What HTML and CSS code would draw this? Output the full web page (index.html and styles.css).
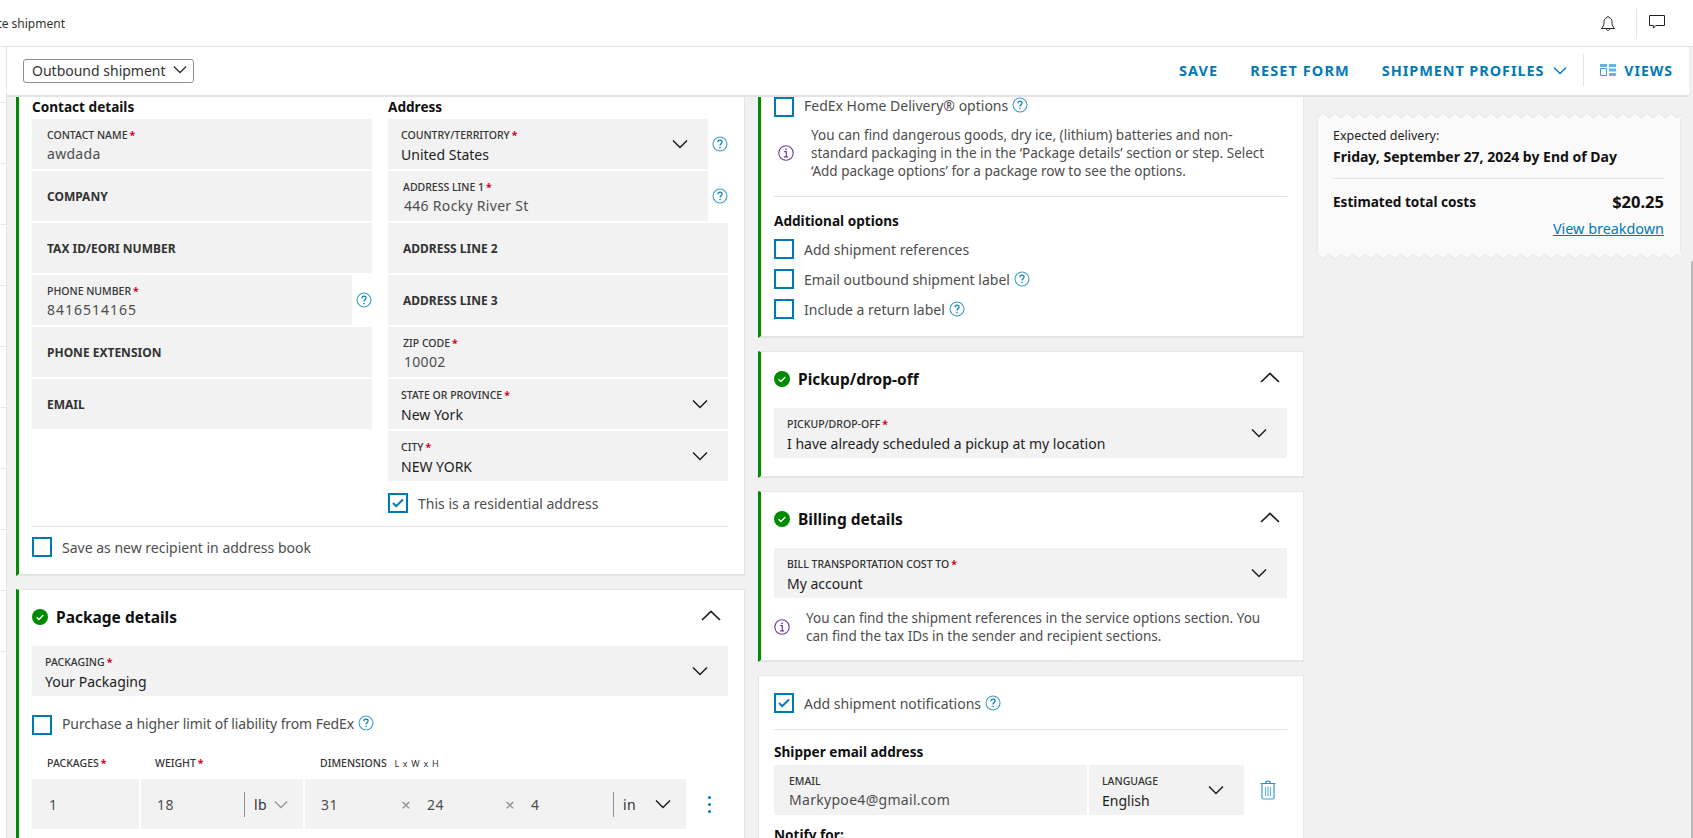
FILE: index.html
```html
<!DOCTYPE html>
<html lang="en">
<head>
    <meta charset="UTF-8">
    <meta name="viewport" content="width=device-width, initial-scale=1.0">
    <title>Create shipment</title>
    <link rel="stylesheet" href="styles.css">
</head>
<body>
    <svg class="sprites" aria-hidden="true">
        <symbol id="chev" viewBox="0 0 16 10"><path d="M1 1.5l7 7 7-7" fill="none" stroke="currentColor" stroke-width="1.5"/></symbol>
        <symbol id="chev-up" viewBox="0 0 20 11"><path d="M1 10l9-8.5 9 8.5" fill="none" stroke="currentColor" stroke-width="1.7"/></symbol>
        <symbol id="help" viewBox="0 0 16 16"><circle cx="8" cy="8" r="7" fill="none" stroke="#3d9bd0" stroke-width="1.1"/><path d="M5.9 6.2c0-1.3 1-2 2.1-2s2.1.8 2.1 1.9c0 1.6-2.1 1.6-2.1 3.4" fill="none" stroke="#007ab7" stroke-width="1.2"/><rect x="7.4" y="10.8" width="1.3" height="1.4" fill="#007ab7"/></symbol>
        <symbol id="done" viewBox="0 0 16 16"><circle cx="8" cy="8" r="8" fill="#008a00"/><path d="M4.6 8.2l2.3 2.2 4.4-4.4" fill="none" stroke="#fff" stroke-width="1.4"/></symbol>
        <symbol id="info" viewBox="0 0 16 16"><circle cx="8" cy="8" r="7.2" fill="none" stroke="#6a3a9e" stroke-width="1.1"/><rect x="7.3" y="3.6" width="1.5" height="1.5" fill="#6a3a9e"/><path d="M6.2 6.7h2.1v5M6 11.8h4.2" fill="none" stroke="#6a3a9e" stroke-width="1.2"/></symbol>
        <symbol id="tick" viewBox="0 0 12 10"><path d="M1 5l3.2 3.2L11 1.5" fill="none" stroke="#007ab7" stroke-width="2"/></symbol>
    </svg>

    <header class="topbar">
        <div class="crumb"><span>Create shipment</span></div>
        <svg class="bell" viewBox="0 0 16 17"><path d="M8 1.500c-.7 0-1 .5-1 1.100C4.800 3.300 4 5 4 7.200c0 3-.8 4.600-2.500 6.300h13C12.800 11.800 12 10.200 12 7.200c0-2.200-.8-3.900-3-4.600 0-.6-.3-1.100-1-1.100zM6.300 13.800c.2 1.100.9 1.700 1.700 1.700s1.500-.6 1.700-1.700" fill="none" stroke="#222" stroke-width="1"/></svg>
        <span class="topbar-sep"></span>
        <svg class="comment" viewBox="0 0 16 14"><path d="M.5.5h15v10H7l-2.600 2.500v-2.500H.5z" fill="none" stroke="#222" stroke-width="1"/></svg>
    </header>

    <div class="shell">
        <aside class="rail">
            <i></i><i></i><i></i><i></i><i></i><i></i><i></i><i></i><i></i><i></i>
        </aside>

        <div class="content">
            <div class="toolbar">
                <div class="select-box">Outbound shipment <svg class="chev-sm"><use href="#chev"/></svg></div>
                <nav class="actions">
                    <a class="action save">SAVE</a>
                    <a class="action reset">RESET FORM</a>
                    <a class="action profiles">SHIPMENT PROFILES <svg class="chev-blue"><use href="#chev"/></svg></a>
                    <span class="action-sep"></span>
                    <a class="action views">
                        <svg class="views-icon" viewBox="0 0 16 12"><path d="M0 0h7v3H0zM9 0h7v3H9zM9 4.500h7v3H9zM9 9h7v3H9z" fill="#6db3d8"/><path d="M.5 4.500h6v7h-6z" fill="none" stroke="#3d9bd0"/></svg>
                        VIEWS
                    </a>
                </nav>
            </div>

            <main class="columns">
                <div class="col col-left">
                    <section class="card green first">
                        <div class="addr-grid">
                            <div class="stack">
                                <h4 class="sub">Contact details</h4>
                                <div class="field f-a"><label>CONTACT NAME<b>*</b></label><span class="val grey">awdada</span></div>
                                <div class="field empty f-a">COMPANY</div>
                                <div class="field empty f-a">TAX ID/EORI NUMBER</div>
                                <div class="with-help">
                                    <div class="field f-a"><label>PHONE NUMBER<b>*</b></label><span class="val grey digits">8416514165</span></div>
                                    <svg class="help"><use href="#help"/></svg>
                                </div>
                                <div class="field empty f-a">PHONE EXTENSION</div>
                                <div class="field empty f-a">EMAIL</div>
                            </div>
                            <div class="stack">
                                <h4 class="sub">Address</h4>
                                <div class="with-help">
                                    <div class="field dd f-c"><label>COUNTRY/TERRITORY<b>*</b></label><span class="val">United States</span><svg class="chev"><use href="#chev"/></svg></div>
                                    <svg class="help"><use href="#help"/></svg>
                                </div>
                                <div class="with-help">
                                    <div class="field f-d"><label>ADDRESS LINE 1<b>*</b></label><span class="val grey shift">446 Rocky River St</span></div>
                                    <svg class="help"><use href="#help"/></svg>
                                </div>
                                <div class="field empty f-d">ADDRESS LINE 2</div>
                                <div class="field empty f-d">ADDRESS LINE 3</div>
                                <div class="field f-d"><label>ZIP CODE<b>*</b></label><span class="val grey shift">10002</span></div>
                                <div class="field dd f-c"><label>STATE OR PROVINCE<b>*</b></label><span class="val">New York</span><svg class="chev"><use href="#chev"/></svg></div>
                                <div class="field dd f-c"><label>CITY<b>*</b></label><span class="val">NEW YORK</span><svg class="chev"><use href="#chev"/></svg></div>
                                <div class="check residential"><span class="box on"><svg><use href="#tick"/></svg></span>This is a residential address</div>
                            </div>
                        </div>
                        <hr class="rule rule-save">
                        <div class="check"><span class="box"></span>Save as new recipient in address book</div>
                    </section>

                    <section class="card green package">
                        <div class="card-head">
                            <svg class="done"><use href="#done"/></svg>
                            <h3>Package details</h3>
                            <svg class="chev-up"><use href="#chev-up"/></svg>
                        </div>
                        <div class="field dd f-b"><label>PACKAGING<b>*</b></label><span class="val">Your Packaging</span><svg class="chev"><use href="#chev"/></svg></div>
                        <div class="check raised liability"><span class="box"></span>Purchase a higher limit of liability from FedEx<svg class="help inline"><use href="#help"/></svg></div>
                        <div class="pkg-head">
                            <span class="ph-packages">PACKAGES<b>*</b></span>
                            <span class="ph-weight">WEIGHT<b>*</b></span>
                            <span class="ph-dims">DIMENSIONS <small>L x W x H</small></span>
                        </div>
                        <div class="pkg-row">
                            <div class="cell c-packages">1</div>
                            <div class="cell c-weight"><span class="num">18</span><span class="unit-sep"></span><span class="unit">lb</span><svg class="chev-grey"><use href="#chev"/></svg></div>
                            <div class="cell c-dims">
                                <span class="d1">31</span><span class="times">×</span><span class="d2">24</span><span class="times">×</span><span class="d3">4</span>
                                <span class="unit-sep"></span><span class="unit">in</span><svg class="chev"><use href="#chev"/></svg>
                            </div>
                            <div class="dots"><i></i><i></i><i></i></div>
                        </div>
                    </section>
                </div>

                <div class="col col-mid">
                    <section class="card green first service">
                        <div class="check raised"><span class="box"></span>FedEx Home Delivery® options<svg class="help inline"><use href="#help"/></svg></div>
                        <div class="note note-service">
                            <svg class="info"><use href="#info"/></svg>
                            <p>You can find dangerous goods, dry ice, (lithium) batteries and non-standard packaging in the in the ‘Package details’ section or step. Select ‘Add package options’ for a package row to see the options.</p>
                        </div>
                        <hr class="rule rule-options">
                        <h4 class="sub options-title">Additional options</h4>
                        <div class="check-list">
                            <div class="check"><span class="box"></span>Add shipment references</div>
                            <div class="check"><span class="box"></span>Email outbound shipment label<svg class="help inline"><use href="#help"/></svg></div>
                            <div class="check"><span class="box"></span>Include a return label<svg class="help inline"><use href="#help"/></svg></div>
                        </div>
                    </section>

                    <section class="card green pickup">
                        <div class="card-head">
                            <svg class="done"><use href="#done"/></svg>
                            <h3>Pickup/drop-off</h3>
                            <svg class="chev-up"><use href="#chev-up"/></svg>
                        </div>
                        <div class="field dd f-e"><label>PICKUP/DROP-OFF<b>*</b></label><span class="val">I have already scheduled a pickup at my location</span><svg class="chev"><use href="#chev"/></svg></div>
                    </section>

                    <section class="card green billing">
                        <div class="card-head">
                            <svg class="done"><use href="#done"/></svg>
                            <h3>Billing details</h3>
                            <svg class="chev-up"><use href="#chev-up"/></svg>
                        </div>
                        <div class="field dd f-e"><label>BILL TRANSPORTATION COST TO<b>*</b></label><span class="val">My account</span><svg class="chev"><use href="#chev"/></svg></div>
                        <div class="note note-billing">
                            <svg class="info"><use href="#info"/></svg>
                            <p>You can find the shipment references in the service options section. You can find the tax IDs in the sender and recipient sections.</p>
                        </div>
                    </section>

                    <section class="card notify">
                        <div class="check"><span class="box on"><svg><use href="#tick"/></svg></span>Add shipment notifications<svg class="help inline"><use href="#help"/></svg></div>
                        <hr class="rule rule-notify">
                        <h4 class="sub email-title">Shipper email address</h4>
                        <div class="email-row">
                            <div class="field f-g email"><label>EMAIL</label><span class="val grey">Markypoe4@gmail.com</span></div>
                            <div class="field dd f-h lang"><label>LANGUAGE</label><span class="val">English</span><svg class="chev"><use href="#chev"/></svg></div>
                            <svg class="trash" viewBox="0 0 16 20"><path d="M.5 3.500h15M5.500 3.500C5.500 1.500 6 1 8 1s2.500.5 2.500 2.500" fill="none" stroke="#2f8fc6" stroke-width="1.200"/><path d="M2 3.500v14c0 1 .5 1.500 1.500 1.500h9c1 0 1.500-.5 1.500-1.500v-14" fill="none" stroke="#3d9bd0" stroke-width="1.200"/><path d="M5.500 7v9M8 6.500v10M10.500 7v9" fill="none" stroke="#6db3d8" stroke-width="1.200"/></svg>
                        </div>
                        <h4 class="sub notify-title">Notify for:</h4>
                    </section>
                </div>

                <aside class="col col-right">
                    <div class="receipt">
                        <svg class="zig zig-top" height="7" width="100%"><defs><pattern id="zt" width="12" height="7" patternUnits="userSpaceOnUse"><path d="M0 7V6L6 1l6 5v1z" fill="#fafafa"/><path d="M0 6l6-5 6 5" fill="none" stroke="#e4e4e4"/></pattern></defs><rect width="100%" height="7" fill="url(#zt)"/></svg>
                        <div class="receipt-body">
                            <div class="expected">Expected delivery:</div>
                            <div class="delivery-date">Friday, September 27, 2024 by End of Day</div>
                            <hr class="rule rule-receipt">
                            <div class="total-row">
                                <span class="total-label">Estimated total costs</span>
                                <span class="total">$20.25</span>
                            </div>
                            <a class="breakdown">View breakdown</a>
                        </div>
                        <svg class="zig zig-bottom" height="7" width="100%"><defs><pattern id="zb" width="12" height="7" patternUnits="userSpaceOnUse"><path d="M0 0V1l6 5 6-5V0z" fill="#fafafa"/><path d="M0 1l6 5 6-5" fill="none" stroke="#e4e4e4"/></pattern></defs><rect width="100%" height="7" fill="url(#zb)"/></svg>
                    </div>
                </aside>
            </main>
        </div>
    </div>
    <div class="scrollbar"></div>
</body>
</html>
```

FILE: styles.css
```css
* {
    box-sizing: border-box;
}

html, body {
    margin: 0;
    height: 838px;
    overflow: hidden;
}

body {
    font-family: "Noto Sans", Arial, sans-serif;
    font-size: 14px;
    color: #333;
    background: #f1f1f1;
    position: relative;
}

.sprites {
    display: none;
}

/* top bar */
.topbar {
    height: 47px;
    background: #fff;
    border-bottom: 1px solid #e3e3e3;
    display: flex;
    align-items: center;
}

.crumb {
    width: 65px;
    display: flex;
    justify-content: flex-end;
    overflow: hidden;
    white-space: nowrap;
    font-size: 12px;
    color: #333;
}

.bell {
    width: 16px;
    height: 17px;
    margin-left: auto;
}

.topbar-sep {
    width: 1px;
    height: 28px;
    background: #e3e3e3;
    margin: 0 12px 0 20px;
}

.comment {
    width: 16px;
    height: 14px;
    margin-right: 28px;
    margin-top: -3px;
}

.shell {
    display: flex;
    height: 791px;
}

.rail {
    width: 7px;
    background: #fff;
    border-right: 1px solid #e3e3e3;
    padding-top: 55px;
    display: flex;
    flex-direction: column;
    gap: 60px;
}

.rail i {
    display: block;
    height: 1px;
    background: #e6e6e6;
}

.content {
    flex: 1;
    min-width: 0;
}

/* toolbar */
.toolbar {
    height: 50px;
    width: 1682px;
    background: #fff;
    border-bottom: 2px solid #e3e3e3;
    display: flex;
    align-items: center;
    padding: 0 16px;
}

.select-box {
    width: 171px;
    height: 24px;
    border: 1px solid #8e8e8e;
    border-radius: 3px;
    padding-left: 8px;
    font-size: 14px;
    line-height: 22px;
    color: #333;
    display: flex;
    align-items: center;
    justify-content: space-between;
}

.chev-sm {
    width: 14px;
    height: 9px;
    margin: 0 6px 3px 0;
    color: #333;
}

.actions {
    margin-left: auto;
    display: flex;
    align-items: center;
    margin-top: -2px;
}

.action {
    font-size: 14.5px;
    font-weight: 700;
    letter-spacing: 1.1px;
    color: #007ab7;
    white-space: nowrap;
    display: flex;
    align-items: center;
}

.reset {
    margin-left: 32px;
}

.profiles {
    margin-left: 32px;
    letter-spacing: .9px;
}

.chev-blue {
    width: 14px;
    height: 9px;
    margin-left: 9px;
    color: #007ab7;
}

.action-sep {
    width: 1px;
    height: 32px;
    background: #e3e3e3;
    margin: 0 16px;
}

.views {
    font-size: 14px;
    letter-spacing: 1px;
}

.views-icon {
    width: 16px;
    height: 12px;
    margin-right: 8px;
}

/* columns */
.columns {
    display: grid;
    grid-template-columns: 729px 546px 364px;
    gap: 13px;
    padding-left: 9px;
    height: 741px;
    overflow: hidden;
}

.col {
    display: flex;
    flex-direction: column;
    gap: 13px;
    min-width: 0;
}

.card {
    background: #fff;
    border: 1px solid #e6e6e6;
    border-bottom: 2px solid #e3e3e3;
    padding: 0 16px 0 15px;
    flex-shrink: 0;
}

.card.green {
    border-left: 3px solid #008a00;
    padding-left: 13px;
}

.card.first {
    border-top: 0;
}

.col-left .first {
    height: 479px;
}

.package {
    padding-bottom: 40px;
}

.addr-grid {
    display: grid;
    grid-template-columns: 340px 340px;
    gap: 16px;
}

.stack {
    display: flex;
    flex-direction: column;
    gap: 2px;
}

.sub {
    margin: 0;
    font-size: 13.6px;
    font-weight: 700;
    line-height: 20px;
    color: #111;
}

.with-help {
    display: flex;
    align-items: center;
    justify-content: space-between;
}

.help {
    width: 16px;
    height: 16px;
    flex-shrink: 0;
}

.help.inline {
    margin-left: 4px;
}

/* form fields */
.field {
    position: relative;
    height: 50px;
    flex-shrink: 0;
    background: #f2f2f2;
    display: flex;
    flex-direction: column;
    padding-top: 10px;
}

.field label {
    font-size: 10.5px;
    font-weight: 500;
    line-height: 13px;
    color: #333;
    white-space: nowrap;
}

.field b, .pkg-head b {
    color: #d0021b;
    font-weight: 700;
    margin-left: 2px;
}

.val {
    font-size: 14px;
    line-height: 20px;
    color: #1d1d1d;
    margin-top: 3px;
}

.val.grey {
    color: #4d4d4d;
    margin-top: 2px;
    letter-spacing: .3px;
}

.val.digits {
    letter-spacing: 1px;
}

.empty {
    justify-content: center;
    padding-top: 0;
    font-size: 12px;
    font-weight: 700;
    color: #333;
}

.f-a { padding-left: 15px; }
.f-b { padding-left: 13px; }
.f-c { padding-left: 13px; }
.f-d { padding-left: 15px; }
.f-e { padding-left: 13px; }
.f-g { padding-left: 15px; }
.f-h { padding-left: 13px; }

.with-help .field {
    width: 320px;
}

.shift {
    padding-left: 1px;
}

.chev {
    position: absolute;
    right: 20px;
    top: 20px;
    width: 16px;
    height: 10px;
    color: #1d1d1d;
}

/* checkboxes */
.check {
    display: flex;
    align-items: center;
    height: 20px;
    color: #4d4d4d;
    font-size: 14px;
    white-space: nowrap;
}

.check.raised {
    align-items: flex-start;
    line-height: 18px;
}

.box {
    width: 20px;
    height: 20px;
    border: 2px solid #007ab7;
    background: #fff;
    margin-right: 10px;
    flex-shrink: 0;
    display: flex;
    align-items: center;
    justify-content: center;
}

.box svg {
    width: 12px;
    height: 10px;
}

.residential {
    margin-top: 10px;
}

.rule {
    border: 0;
    height: 1px;
    background: #e3e3e3;
    margin: 0;
}

.rule-save {
    margin: 13px 0 10px;
}

/* card headers */
.card-head {
    display: flex;
    align-items: center;
    height: 53px;
    margin-bottom: 3px;
}

.card-head h3 {
    margin: 0;
    font-size: 15.5px;
    font-weight: 700;
    color: #111;
}

.done {
    width: 16px;
    height: 16px;
    margin-right: 8px;
}

.chev-up {
    width: 20px;
    height: 11px;
    margin: 0 7px 2px auto;
    color: #1d1d1d;
}

/* package details */
.liability {
    margin-top: 19px;
    letter-spacing: -.1px;
}

.pkg-head {
    display: flex;
    font-size: 10.5px;
    font-weight: 500;
    color: #333;
    margin-top: 22px;
    line-height: 13px;
}

.ph-packages {
    width: 107px;
    padding-left: 15px;
}

.ph-weight {
    width: 166px;
    padding-left: 16px;
}

.ph-dims {
    padding-left: 15px;
}

.ph-dims small {
    font-size: 9px;
    font-weight: 400;
    letter-spacing: .7px;
    margin-left: 5px;
}

.pkg-row {
    display: flex;
    gap: 2px;
    margin-top: 9px;
    align-items: center;
}

.cell {
    height: 50px;
    background: #f2f2f2;
    display: flex;
    align-items: center;
    color: #4d4d4d;
    position: relative;
    letter-spacing: .4px;
}

.c-packages {
    width: 107px;
    padding-left: 17px;
}

.c-weight {
    width: 162px;
    padding-left: 16px;
}

.c-dims {
    width: 381px;
    padding-left: 16px;
}

.c-dims .chev {
    right: 15px;
}

.num {
    width: 87px;
}

.unit-sep {
    width: 1px;
    height: 25px;
    background: #8e8e8e;
    margin-right: 9px;
}

.unit {
    color: #333;
}

.chev-grey {
    width: 14px;
    height: 9px;
    margin-left: 7px;
    color: #9a9a9a;
}

.d1 {
    width: 80px;
}

.d2 {
    width: 78px;
    margin-left: 16px;
}

.d3 {
    width: 82px;
    margin-left: 16px;
}

.times {
    color: #8e8e8e;
    width: 10px;
    font-size: 17px;
}

.dots {
    display: flex;
    flex-direction: column;
    gap: 4px;
    margin-left: 20px;
}

.dots i {
    display: block;
    width: 3px;
    height: 3px;
    border-radius: 50%;
    background: #007ab7;
}

/* middle column */
.service {
    height: 241px;
}

.note {
    display: flex;
    align-items: center;
    color: #4d4d4d;
    font-size: 13.5px;
    line-height: 18px;
}

.note p {
    margin: 0;
}

.info {
    width: 16px;
    height: 16px;
    flex-shrink: 0;
}

.note-service {
    margin-top: 9px;
    padding-left: 4px;
}

.note-service .info {
    margin-right: 17px;
}

.note-billing {
    margin-top: 11px;
}

.note-billing .info {
    margin-right: 16px;
}

.note-billing p {
    width: 470px;
}

.rule-options {
    margin-top: 16px;
}

.options-title {
    margin-top: 14px;
}

.check-list {
    display: flex;
    flex-direction: column;
    gap: 10px;
    margin-top: 8px;
}

.pickup {
    height: 127px;
}

.billing {
    height: 171px;
}

.notify {
    padding-top: 17px;
}

.rule-notify {
    margin-top: 16px;
}

.email-title {
    margin-top: 12px;
}

.email-row {
    display: flex;
    gap: 2px;
    align-items: center;
    margin-top: 3px;
}

.email {
    flex: 0 0 313px;
}

.lang {
    flex: 0 0 155px;
}

.trash {
    width: 16px;
    height: 20px;
    margin-left: 14px;
}

.notify-title {
    margin-top: 10px;
}

/* estimate */
.receipt {
    margin-top: 15px;
    width: 364px;
    display: flex;
    flex-direction: column;
}

.zig {
    display: block;
}

.receipt-body {
    background: #fafafa;
    border-left: 1px solid #e8e8e8;
    border-right: 1px solid #e8e8e8;
    padding: 8px 16px 0 15px;
    height: 134px;
}

.expected {
    font-size: 12.5px;
    line-height: 18px;
    color: #222;
}

.delivery-date {
    font-size: 14px;
    font-weight: 700;
    line-height: 20px;
    margin-top: 2px;
    color: #111;
}

.rule-receipt {
    margin-top: 11px;
}

.total-row {
    display: flex;
    justify-content: space-between;
    align-items: center;
    margin-top: 12px;
    line-height: 22px;
}

.total-label {
    font-size: 13.6px;
    font-weight: 700;
    color: #111;
}

.total {
    font-size: 16.5px;
    font-weight: 700;
    color: #111;
}

.breakdown {
    display: block;
    text-align: right;
    margin-top: 6px;
    font-size: 14.4px;
    line-height: 19px;
    color: #007ab7;
    text-decoration: underline;
}

.scrollbar {
    position: absolute;
    right: 0;
    top: 261px;
    width: 2px;
    height: 577px;
    background: #bcbcbc;
}
```
